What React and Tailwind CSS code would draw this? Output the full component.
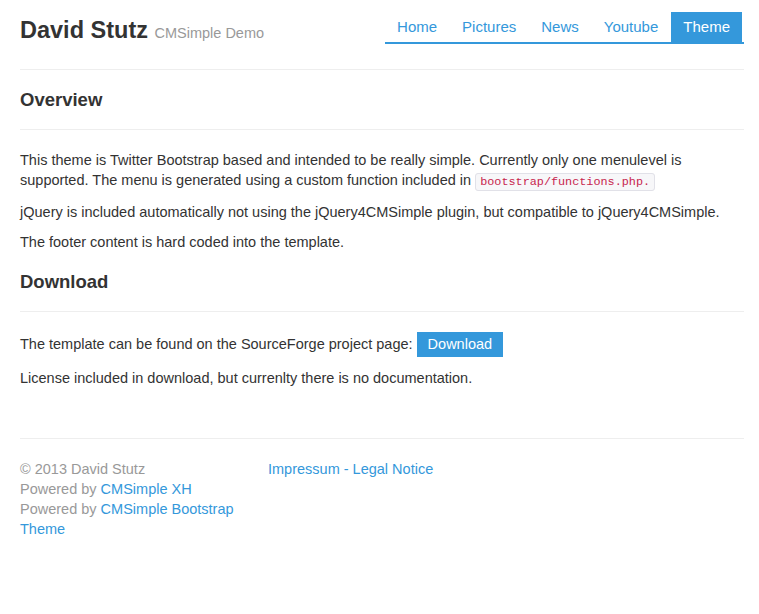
import React from "react";

const NAV = ["Home", "Pictures", "News", "Youtube", "Theme"];

function Heading({ children }) {
  return (
    <>
      <h3 className="mt-5 text-[18.5px] font-bold leading-5 text-[#333]">{children}</h3>
      <hr className="mt-[19px] mb-5 border-0 border-t border-[#eee]" />
    </>
  );
}

export default function App() {
  return (
    <div
      className="bg-white min-h-[614px] text-[#333] text-[14.5px] leading-5"
      style={{ fontFamily: '"Liberation Sans", Arial, sans-serif' }}
    >
      <div className="ml-5 w-[724px]">
        {/* header */}
        <div className="flex justify-between items-start">
          <h1 className="pt-[15px] text-[23.5px] font-bold leading-[30px] text-[#333]">
            David Stutz <span className="text-[14.5px] font-normal text-[#999]">CMSimple Demo</span>
          </h1>
          <ul className="mt-3 flex gap-px pr-[2px] border-b-2 border-[#3498db] text-[15px]">
            {NAV.map((item) => (
              <li key={item}>
                <a
                  href="#"
                  className={
                    item === "Theme"
                      ? "block px-3 py-[5px] leading-5 bg-[#3498db] text-white"
                      : "block px-3 py-[5px] leading-5 text-[#3498db]"
                  }
                >
                  {item}
                </a>
              </li>
            ))}
          </ul>
        </div>
        <hr className="mt-[21px] mb-5 border-0 border-t border-[#eee]" />

        <Heading>Overview</Heading>
        <p className="mb-[10px]">
          This theme is Twitter Bootstrap based and intended to be really simple. Currently only one menulevel is
          supported. The menu is generated using a custom function included in{" "}
          <code
            className="px-1 py-[1px] rounded-[3px] border border-[#e1e1e8] bg-[#f7f7f9] text-[#c7254e] text-[11.8px]"
            style={{ fontFamily: '"Liberation Mono", monospace' }}
          >
            bootstrap/functions.php.
          </code>
        </p>
        <p className="mb-[10px]">
          jQuery is included automatically not using the jQuery4CMSimple plugin, but compatible to jQuery4CMSimple.
        </p>
        <p className="mb-[10px]">The footer content is hard coded into the template.</p>

        <Heading>Download</Heading>
        <p className="mb-[11px]">
          The template can be found on the SourceForge project page:{" "}
          <a href="#" className="inline-block px-[11px] py-[2px] leading-[21px] bg-[#3498db] text-white">
            Download
          </a>
        </p>
        <p className="mb-[10px]">License included in download, but currenlty there is no documentation.</p>

        {/* footer */}
        <hr className="mt-[50px] mb-5 border-0 border-t border-[#eee]" />
        <div className="grid grid-cols-[248px_1fr] text-[#999]">
          <div>
            <div>© 2013 David Stutz</div>
            <div>
              Powered by <a href="#" className="text-[#3498db]">CMSimple XH</a>
            </div>
            <div>
              Powered by <a href="#" className="text-[#3498db]">CMSimple Bootstrap Theme</a>
            </div>
          </div>
          <div>
            <a href="#" className="text-[#3498db]">Impressum - Legal Notice</a>
          </div>
        </div>
      </div>
    </div>
  );
}
